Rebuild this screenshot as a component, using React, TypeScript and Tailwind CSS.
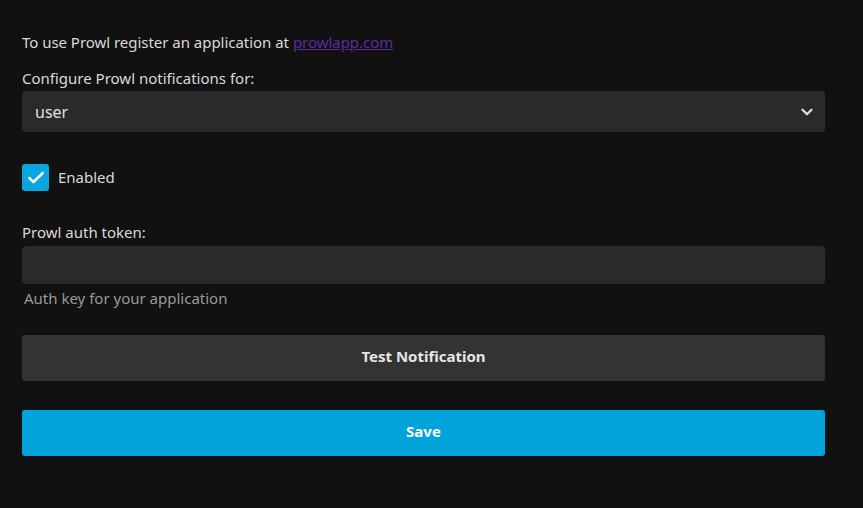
import { ChevronDown, Check } from "lucide-react";

export default function App() {
  return (
    <div
      className="w-full min-h-screen bg-[#111111] text-[#d9d9d9] px-[22px] pt-[32px]"
      style={{ fontFamily: '"Noto Sans", "Open Sans", sans-serif' }}
    >
      <div className="w-[803px]">
        {/* Intro */}
        <p className="text-[15px] leading-[20px] tracking-[-0.03px]">
          To use Prowl register an application at{" "}
          <a href="#" className="text-[#5b2aa0] underline">
            prowlapp.com
          </a>
        </p>

        {/* User select */}
        <label className="block mt-[16px] text-[15px] leading-[20px]">
          Configure Prowl notifications for:
        </label>
        <div className="mt-[3px] h-[41px] bg-[#2a2a2a] rounded-[4px] flex items-center justify-between pl-[13px] pr-[9px]">
          <span className="text-[16px] text-[#e0e0e0]">user</span>
          <ChevronDown className="w-[18px] h-[18px] text-[#e0e0e0]" strokeWidth={3} />
        </div>

        {/* Enabled */}
        <div className="mt-[32px] flex items-center gap-[9px]">
          <div className="w-[27px] h-[27px] rounded-[3px] bg-[#0aa4df] flex items-center justify-center">
            <Check className="w-[20px] h-[20px] text-white" strokeWidth={3} />
          </div>
          <span className="text-[15px]">Enabled</span>
        </div>

        {/* Auth token */}
        <label className="block mt-[31px] text-[15px] leading-[20px]">Prowl auth token:</label>
        <div className="mt-[4px] h-[38px] bg-[#2a2a2a] rounded-[4px]"></div>
        <p className="mt-[4px] ml-[2px] text-[15px] leading-[20px] text-[#9a9a9a]">
          Auth key for your application
        </p>

        {/* Actions */}
        <button className="mt-[27px] w-full h-[46px] pb-[4px] bg-[#333333] rounded-[3px] text-[15px] font-bold text-[#e6e6e6]">
          Test Notification
        </button>
        <button className="mt-[29px] w-full h-[46px] pb-[4px] bg-[#00a4db] rounded-[3px] text-[15px] font-bold text-white">
          Save
        </button>
      </div>
    </div>
  );
}
